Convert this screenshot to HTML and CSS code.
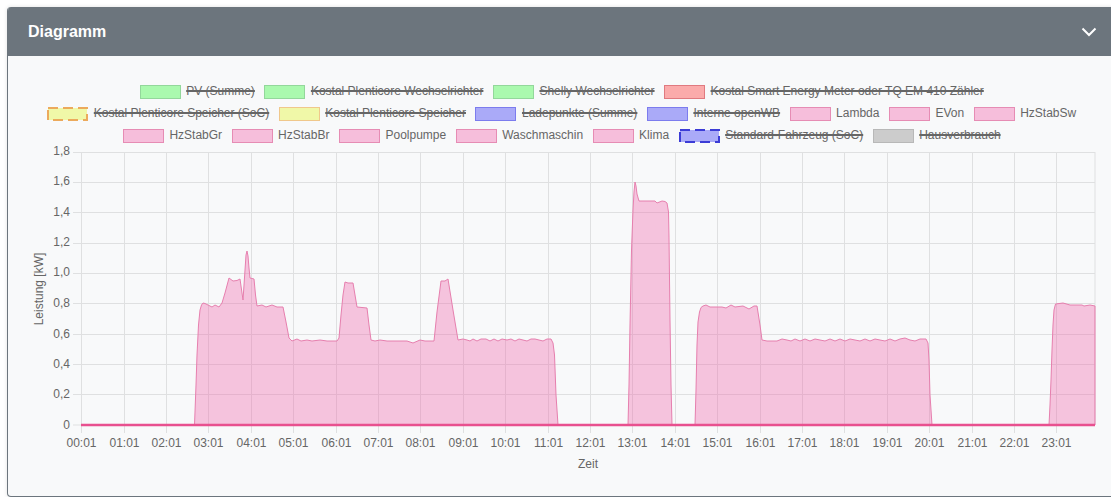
FILE: index.html
```html
<!DOCTYPE html>
<html lang="de">
<head>
<meta charset="utf-8">
<title>Diagramm</title>
<link rel="stylesheet" href="styles.css">
</head>
<body>
<section class="card">
  <header class="card-header">
    <h2 class="card-title">Diagramm</h2>
    <svg class="chevron" viewBox="0 0 16 10" width="16" height="10"><path d="M1.500 1.500 8 8l6.500-6.500"/></svg>
  </header>
  <div class="card-body">
    <div class="legend">
      <div class="legend-row">
        <span class="item off"><i class="box green"></i><span>PV (Summe)</span></span>
        <span class="item off"><i class="box green"></i><span>Kostal Plenticore Wechselrichter</span></span>
        <span class="item off"><i class="box green"></i><span>Shelly Wechselrichter</span></span>
        <span class="item off"><i class="box red"></i><span>Kostal Smart Energy Meter oder TQ EM 410 Zähler</span></span>
      </div>
      <div class="legend-row">
        <span class="item off"><svg class="dash-box dash-yellow" viewBox="0 0 41 14" width="41" height="14"><rect x="1" y="1" width="39" height="12"/></svg><span>Kostal Plenticore Speicher (SoC)</span></span>
        <span class="item off"><i class="box yellow"></i><span>Kostal Plenticore Speicher</span></span>
        <span class="item off"><i class="box blue"></i><span>Ladepunkte (Summe)</span></span>
        <span class="item off"><i class="box blue"></i><span>Interne openWB</span></span>
        <span class="item"><i class="box pink"></i><span>Lambda</span></span>
        <span class="item"><i class="box pink"></i><span>EVon</span></span>
        <span class="item"><i class="box pink"></i><span>HzStabSw</span></span>
      </div>
      <div class="legend-row">
        <span class="item"><i class="box pink"></i><span>HzStabGr</span></span>
        <span class="item"><i class="box pink"></i><span>HzStabBr</span></span>
        <span class="item"><i class="box pink"></i><span>Poolpumpe</span></span>
        <span class="item"><i class="box pink"></i><span>Waschmaschin</span></span>
        <span class="item"><i class="box pink"></i><span>Klima</span></span>
        <span class="item off"><svg class="dash-box dash-blue" viewBox="0 0 41 14" width="41" height="14"><rect x="1" y="1" width="39" height="12"/></svg><span>Standard-Fahrzeug (SoC)</span></span>
        <span class="item off"><i class="box grey"></i><span>Hausverbrauch</span></span>
      </div>
    </div>
    <svg class="chart" viewBox="8 146 1103 350" width="1103" height="350">
      <path class="grid" d="M81.500 152V433M124.500 152V433M166.500 152V433M208.500 152V433M251.500 152V433M293.500 152V433M336.500 152V433M378.500 152V433M420.500 152V433M463.500 152V433M505.500 152V433M548.500 152V433M590.500 152V433M632.500 152V433M675.500 152V433M717.500 152V433M760.500 152V433M802.500 152V433M844.500 152V433M887.500 152V433M929.500 152V433M972.500 152V433M1014.500 152V433M1056.500 152V433M1095 152V425"/>
      <path class="grid" d="M73 152.500H1095M73 182.500H1095M73 212.500H1095M73 243.500H1095M73 273.500H1095M73 303.500H1095M73 334.500H1095M73 364.500H1095M73 394.500H1095M73 425H1095"/>
      <path class="area" d="M194.500 425L196 385 197 355 198.500 325 200 310 201.500 305 203 303 205 303.500 208 305 212 307 215 305 219 307 222 303 225 293 229 278 231 279.500 233 281 237 280.500 240 279 243 300 245 270 246 255 247 251 248 256 249 268 250 278 254 279 255.500 295 257 306 262 305 266 307 272 305 277 307 283 307 286 322 289 338 292 341 297 339 301 341 307 340 312 341 320 340 327 341 337 341 339 338 341 315 343 295 345 282 348 283 353 283 355 295 357 307 367 308 369 325 371 340 375 341 380 340 387 341 407 341 413 343 420 340 425 341 434 341 437 312 441 281 445 281 448 279 453 310 458 340 463 339 467 340 470 341 473 339 477 341 481 339 486 339 490 341 494 339 498 341 502 339 507 340 511 339 515 341 519 339 523 340 527 341 531 339 535 339 539 340 543 341 547 339 551 339 553 343 554.500 355 556 395 558 425 628 425 629 385 630 325 631.500 250 633 210 634 192 635 182 636 186 637 194 639 201 655 201 657 203 662 201 665 201.500 667 203 668.500 212 669 237 670 320 671 385 672 425 695 425 696 390 697 345 698 322 699.500 312 701 307.500 703 306 706 305 710 307 722 307 726 308 731 305 735 307 743 306 749 309 754 306 757 306 760 325 762 340 767 341 777 341 782 339 787 340 791 341 795 339 800 341 805 339 810 341 815 339 820 340 825 341 830 339 835 341 840 339 845 341 850 339 855 340 860 341 865 339 870 341 875 339 880 340 885 341 890 339 895 341 900 339 905 338 910 340 915 341 920 339 926 339 928 343 929 360 930 395 932 425 1049 425 1050 405 1051 380 1052 350 1053 325 1054 310 1055.500 304 1063 303 1070 305 1082 305 1084 306 1090 305 1095 306 1095 425Z"/>
      <path class="baseline" d="M81 425H1095"/>
      <g class="ticks y-ticks">
        <text x="70" y="155">1,8</text><text x="70" y="185">1,6</text><text x="70" y="216">1,4</text><text x="70" y="246">1,2</text><text x="70" y="276">1,0</text><text x="70" y="307">0,8</text><text x="70" y="338">0,6</text><text x="70" y="368">0,4</text><text x="70" y="398">0,2</text><text x="70" y="429">0</text>
      </g>
      <g class="ticks x-ticks">
        <text x="81.500" y="447">00:01</text><text x="124.500" y="447">01:01</text><text x="166.500" y="447">02:01</text><text x="208.500" y="447">03:01</text><text x="251.500" y="447">04:01</text><text x="293.500" y="447">05:01</text><text x="336.500" y="447">06:01</text><text x="378.500" y="447">07:01</text><text x="420.500" y="447">08:01</text><text x="463.500" y="447">09:01</text><text x="505.500" y="447">10:01</text><text x="548.500" y="447">11:01</text><text x="590.500" y="447">12:01</text><text x="632.500" y="447">13:01</text><text x="675.500" y="447">14:01</text><text x="717.500" y="447">15:01</text><text x="760.500" y="447">16:01</text><text x="802.500" y="447">17:01</text><text x="844.500" y="447">18:01</text><text x="887.500" y="447">19:01</text><text x="929.500" y="447">20:01</text><text x="972.500" y="447">21:01</text><text x="1014.500" y="447">22:01</text><text x="1056.500" y="447">23:01</text>
      </g>
      <text class="axis-title" x="588" y="468">Zeit</text>
      <text class="axis-title" transform="translate(43 289) rotate(-90)">Leistung [kW]</text>
    </svg>
  </div>
</section>
</body>
</html>
```
FILE: styles.css
```css
* { box-sizing: border-box; }
html, body { margin: 0; padding: 0; background: #fff; overflow: hidden; }
body {
  padding: 7px 0 0 7px;
  height: 497px;
  font-family: "Liberation Sans", Arial, sans-serif;
}
.card {
  width: 1120px;
  height: 490px;
  border: 1px solid #6c757d;
  border-top: 0;
  border-radius: 4px;
  overflow: hidden;
  background: #f8f9fa;
  display: flex;
  flex-direction: column;
  box-shadow: 0 0 4px rgba(0, 0, 0, .12);
}
.card-header {
  height: 49px;
  flex: none;
  margin-left: -1px;
  background: #6c757d;
  display: flex;
  align-items: center;
  justify-content: space-between;
  padding: 1px 0 0 21px;
  width: 1105px;
  color: #fff;
}
.card-title { margin: 0; font-size: 16px; font-weight: 700; line-height: 1; }
.chevron { margin-right: 15px; fill: none; stroke: #fff; stroke-width: 2; }
.card-body { flex: 1; min-height: 0; }
.legend { padding: 24px 0 0 20px; width: 1088px; height: 90px; }
.legend-row {
  display: flex;
  justify-content: center;
  gap: 10px;
  height: 22px;
  align-items: center;
}
.item {
  display: inline-flex;
  align-items: center;
  gap: 6px;
  font-size: 12px;
  color: #666;
  white-space: nowrap;
}
.off > span { text-decoration: line-through; text-decoration-thickness: 2px; }
.box { display: block; width: 41px; height: 14px; margin: 2px -.5px 0; border: 1.500px solid; }
.green { background: #aaf9ae; border-color: #93d79b; }
.red { background: #fbabab; border-color: #e07a80; }
.yellow { background: #f0f8a8; border-color: #f0c88c; }
.blue { background: #aaaaf8; border-color: #7c7cee; }
.pink { background: #f6bedb; border-color: #e68cb4; }
.grey { background: #cccccc; border-color: #b8b8b8; }
.dash-box { display: block; margin: 2px -.5px 0; }
.dash-box rect { stroke-width: 2; stroke-dasharray: 10 5; }
.dash-yellow rect { fill: #f0f8a8; stroke: #ecaa5c; }
.dash-blue rect { fill: #aaaaf8; stroke: #3c3cd6; }
.chart { display: block; overflow: visible; }
.grid { fill: none; stroke: #dfe0e1; stroke-width: 1; }
.area { fill: rgba(240, 100, 170, .36); stroke: #e67fae; stroke-width: 1; stroke-linejoin: round; }
.baseline { fill: none; stroke: #e8508f; stroke-width: 2.500; }
.ticks text, .axis-title { font-size: 12px; fill: #666; }
.y-ticks text { text-anchor: end; }
.x-ticks text, .axis-title { text-anchor: middle; }
```
